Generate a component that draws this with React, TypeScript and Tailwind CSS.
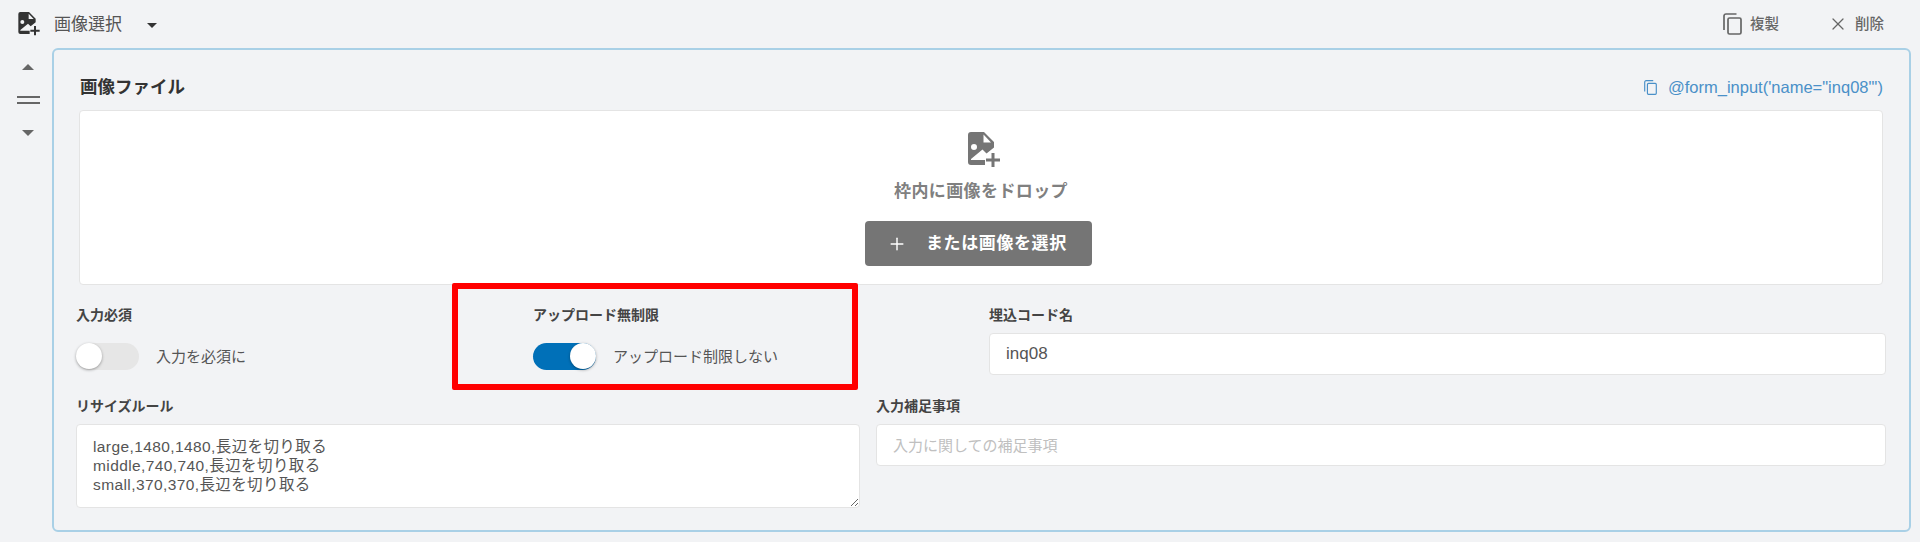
import React from 'react';
import { X, Plus } from 'lucide-react';

const FONT = "font-['Liberation_Sans','Noto_Sans_CJK_JP',sans-serif]";

// file with a folded corner, a small picture cut out of it and a plus at the foot
const ImageFileIcon: React.FC<{ className?: string }> = ({ className }) => (
  <svg viewBox="0 0 32 36" className={className} fill="currentColor">
    <path
      fillRule="evenodd"
      d="M3 0H16L26 10V15.500L18.500 21.500L14.500 17.500L3 27V28H17V33H3A3 3 0 0 1 0 30V3A3 3 0 0 1 3 0ZM15.500 2.500V10.500H23ZM6 12A3 3 0 1 0 6 18A3 3 0 1 0 6 12Z"
    />
    <path d="M23.500 21H26.500V26.500H32V29.500H26.500V35H23.500V29.500H18V26.500H23.500Z" />
  </svg>
);

// two sheets: the back one shows as an L at the upper left
const CopyIcon: React.FC<{ className?: string }> = ({ className }) => (
  <svg viewBox="0 0 19 22" className={className} fill="none" stroke="currentColor" strokeWidth={1.7}>
    <path d="M1 17V3a2 2 0 0 1 2-2h10.500" />
    <rect x="5" y="5" width="13" height="16" rx="1.500" />
  </svg>
);

const Switch: React.FC<{ on?: boolean; label: string }> = ({ on, label }) => (
  <div className="mt-[18px] flex items-center">
    <div className={`relative h-[27px] w-[63px] rounded-full ${on ? 'bg-[#0070b8]' : 'bg-[#e6e6e6]'}`}>
      <div
        className={`absolute top-0 h-[26px] w-[26px] rounded-full bg-white shadow-[0_1px_3px_rgba(0,0,0,0.35)] ${
          on ? 'right-0' : 'left-0'
        }`}
      />
    </div>
    <span className="ml-[17px] text-[15px] leading-[27px] text-[#555]">{label}</span>
  </div>
);

const Label: React.FC<{ children: React.ReactNode }> = ({ children }) => (
  <div className="h-5 text-[14px] leading-5 font-bold text-[#444]">{children}</div>
);

export default function App() {
  return (
    <div className={`${FONT} h-[542px] w-[1920px] overflow-hidden bg-[#f2f3f5]`}>
      {/* Top bar */}
      <div className="flex h-12 items-center pr-9 pl-[18px]">
        <ImageFileIcon className="h-[24px] w-[22px] text-[#333]" />
        <span className="mt-[2px] ml-[14px] text-[17px] text-[#555]">画像選択</span>
        <span className="mt-[2px] ml-[25px] h-0 w-0 border-x-[5px] border-t-[5px] border-x-transparent border-t-[#333]" />
        <div className="ml-auto flex items-center text-[#666]">
          <CopyIcon className="h-[22px] w-[19px]" />
          <span className="mt-[1px] ml-2 text-[14.5px] font-medium">複製</span>
          <X className="ml-[49px] h-[20px] w-[20px]" strokeWidth={1.5} />
          <span className="mt-[1px] ml-[7px] text-[14.5px] font-medium">削除</span>
        </div>
      </div>

      <div className="flex">
        {/* Sort handle */}
        <div className="flex w-[52px] flex-col items-center pt-[16px] pl-[4px]">
          <span className="h-0 w-0 border-x-[6px] border-b-[6px] border-x-transparent border-b-[#666]" />
          <span className="mt-[26px] h-[2px] w-[23px] bg-[#666]" />
          <span className="mt-[4px] h-[2px] w-[23px] bg-[#666]" />
          <span className="mt-[26px] h-0 w-0 border-x-[6px] border-t-[6px] border-x-transparent border-t-[#666]" />
        </div>

        {/* Card */}
        <div className="relative w-[1859px] rounded-[6px] border-2 border-[#a9d0e6] pr-[23px] pb-[22px] pl-[22px]">
          <div className="mt-[26px] flex h-[22px] items-center justify-between pr-[3px] pl-[4px]">
            <span className="mt-[1px] text-[17.5px] font-bold text-[#333]">画像ファイル</span>
            <span className="flex items-center text-[16.5px] text-[#4a90c8]">
              <CopyIcon className="mr-[11px] h-[15px] w-[13px]" />
              {'@form_input(\'name="inq08"\')'}
            </span>
          </div>

          <div className="mt-3 ml-[3px] flex h-[175px] w-[1804px] flex-col items-center rounded-[4px] border border-[#e4e4e4] bg-white pt-[21px]">
            <ImageFileIcon className="ml-[5px] h-9 w-8 text-[#757575]" />
            <div className="mt-[12px] text-[17px] leading-6 font-bold tracking-[0.4px] text-[#808080]">
              枠内に画像をドロップ
            </div>
            <button className="mt-[17px] mr-[5px] flex h-[45px] w-[227px] items-center rounded-[4px] bg-[#757575] pl-[22px] text-[17px] font-bold tracking-[0.6px] text-white">
              <Plus className="h-[20px] w-[20px]" strokeWidth={1.75} />
              <span className="ml-[19px]">または画像を選択</span>
            </button>
          </div>

          <div className="mt-5 grid grid-cols-[457px_456px_1fr]">
            <div>
              <Label>入力必須</Label>
              <Switch label="入力を必須に" />
            </div>
            <div>
              <Label>アップロード無制限</Label>
              <Switch on label="アップロード制限しない" />
            </div>
            <div>
              <Label>埋込コード名</Label>
              <input
                defaultValue="inq08"
                className="mt-2 h-[42px] w-full rounded-[4px] border border-[#e4e4e4] bg-white px-4 text-[17px] text-[#555] outline-none"
              />
            </div>
          </div>

          <div className="mt-[21px] grid grid-cols-[784px_1fr] gap-x-4">
            <div>
              <Label>リサイズルール</Label>
              <textarea
                readOnly
                defaultValue={'large,1480,1480,長辺を切り取る\nmiddle,740,740,長辺を切り取る\nsmall,370,370,長辺を切り取る'}
                className="mt-2 block h-[84px] w-full rounded-[4px] border border-[#e4e4e4] bg-white px-4 pt-[12px] text-[15.5px] leading-[19px] tracking-[0.4px] text-[#555] outline-none"
              />
            </div>
            <div>
              <Label>入力補足事項</Label>
              <input
                placeholder="入力に関しての補足事項"
                className="mt-2 h-[42px] w-full rounded-[4px] border border-[#e4e4e4] bg-white px-4 text-[15px] text-[#555] outline-none placeholder:text-[#c0c0c0]"
              />
            </div>
          </div>

          {/* Highlight box laid over the form */}
          <div className="absolute top-[233px] left-[398px] h-[107px] w-[406px] rounded-[2px] border-[6px] border-[#ff0000]" />
        </div>
      </div>
    </div>
  );
}
